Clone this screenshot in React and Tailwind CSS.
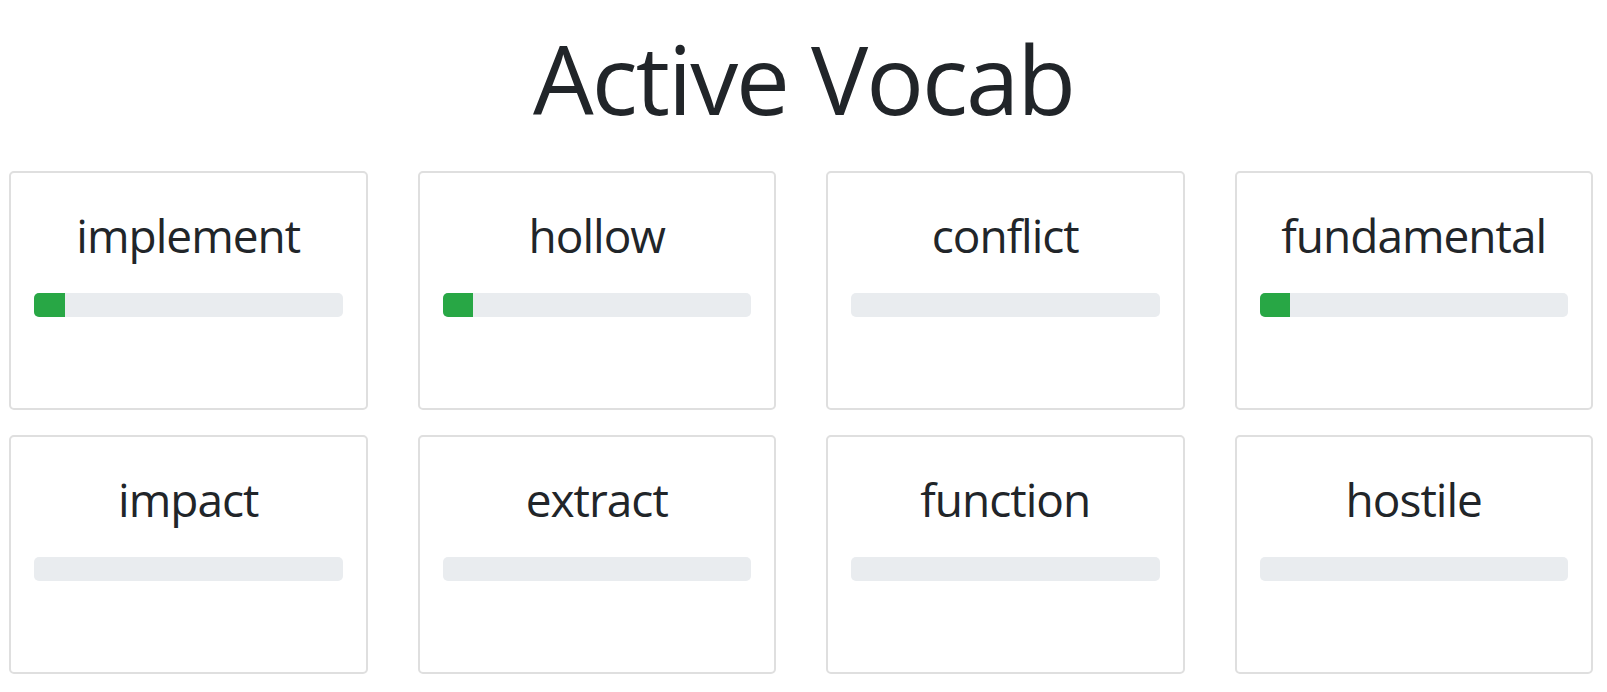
const words = [
  { id: 1, word: "implement", progress: 10 },
  { id: 2, word: "hollow", progress: 10 },
  { id: 3, word: "conflict", progress: 0 },
  { id: 4, word: "fundamental", progress: 10 },
  { id: 5, word: "impact", progress: 0 },
  { id: 6, word: "extract", progress: 0 },
  { id: 7, word: "function", progress: 0 },
  { id: 8, word: "hostile", progress: 0 },
];

function WordCard({ word, progress }) {
  return (
    <div className="h-[239px] rounded-[5px] border-2 border-[#dfdfdf] bg-white px-[23px] pt-[35px]">
      <h2 className="text-center text-[46px] leading-[1.2] font-normal tracking-[-1px] text-[#212529]">
        {word}
      </h2>
      {/* progress */}
      <div className="mt-[30px] h-[24px] w-full overflow-hidden rounded-[5px] bg-[#e9ecef]">
        {progress > 0 && (
          <div className="h-full bg-[#28a745]" style={{ width: `${progress}%` }} />
        )}
      </div>
    </div>
  );
}

export default function App() {
  return (
    <div
      className="min-h-screen w-full bg-white"
      style={{ fontFamily: '"Open Sans", "Noto Sans", sans-serif' }}
    >
      <h1 className="pt-[20px] text-center text-[96px] leading-[1.2] font-normal tracking-[-2px] text-[#212529]">
        Active Vocab
      </h1>

      <div className="mt-[36px] grid grid-cols-4 gap-x-[50px] gap-y-[25px] pl-[9px] pr-[14px]">
        {words.map((item) => (
          <WordCard key={item.id} word={item.word} progress={item.progress} />
        ))}
      </div>
    </div>
  );
}
